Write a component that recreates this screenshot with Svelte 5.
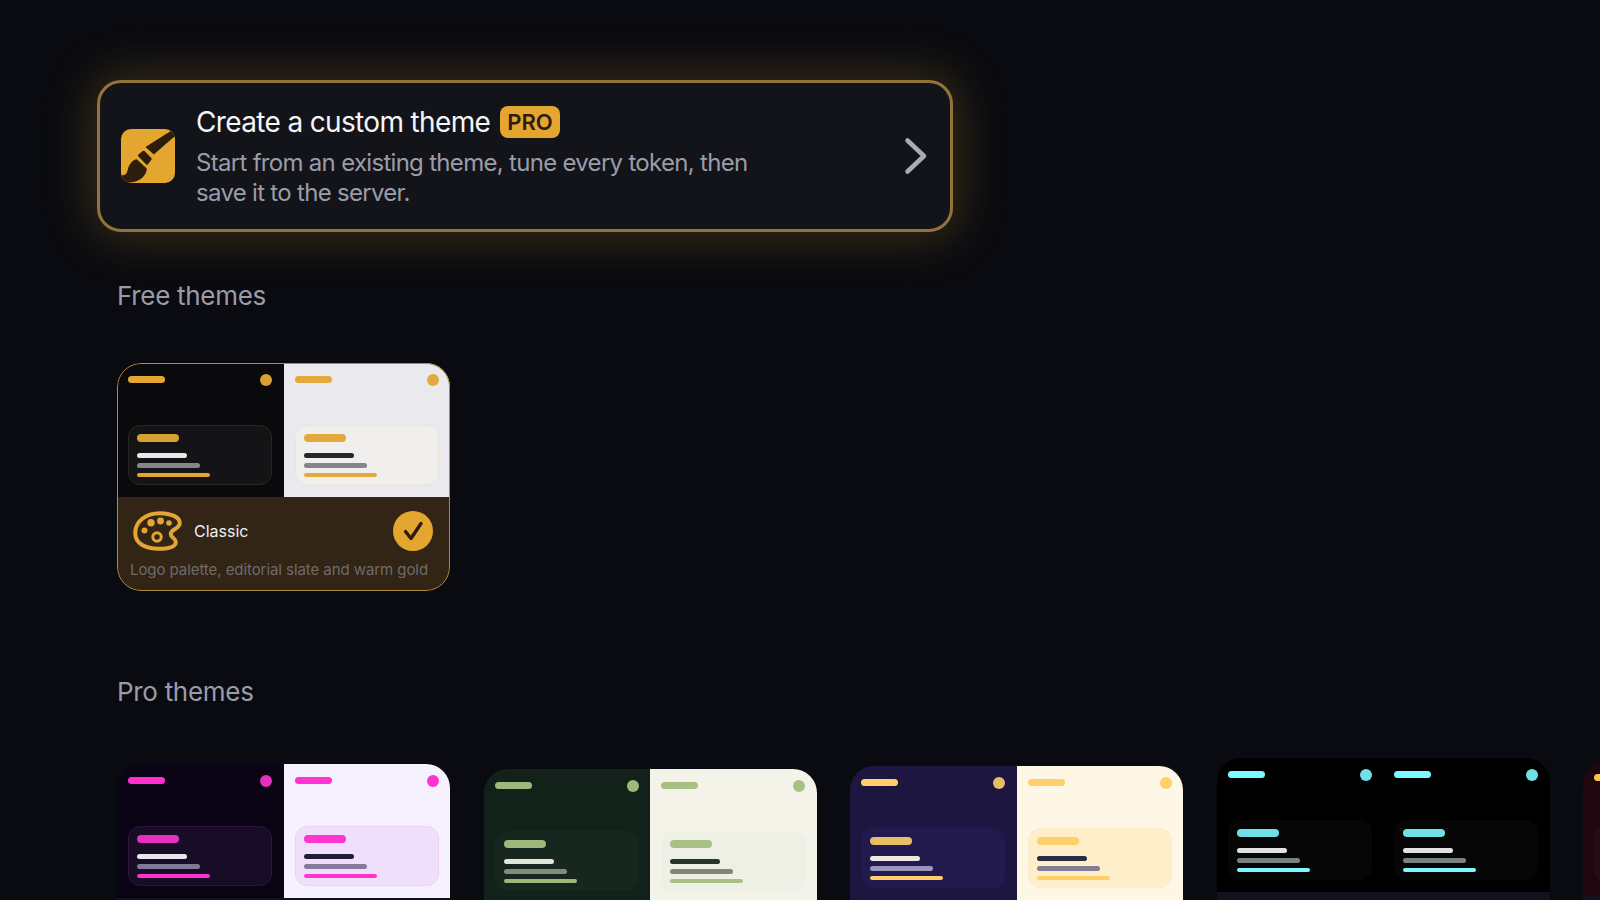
<script>
  const classic = {
    name: 'Classic',
    desc: 'Logo palette, editorial slate and warm gold',
    dark: { bg: '#0a0a0c', inner: '#141315', edge: '#2b271e', accent: '#e3a633', soft: '#d9a033', l1: '#e8e8ea', l2: '#85858a' },
    light: { bg: '#e9e9ee', inner: '#f0efee', edge: '#efe6d2', accent: '#e5a93b', soft: '#e5a93b', l1: '#26262b', l2: '#85858c' }
  };

  const proThemes = [
    {
      top: 6,
      dark: { bg: '#0a0415', inner: '#170d27', edge: '#33163f', accent: '#ff2fd0', soft: '#e52fc0', l1: '#ebe5f1', l2: '#7f7896' },
      light: { bg: '#f6f1ff', inner: '#efdffb', edge: '#f6cdf2', accent: '#ff33d2', soft: '#ff33d2', l1: '#241a3a', l2: '#857a9b' }
    },
    {
      top: 11,
      dark: { bg: '#12221b', inner: '#17271f', edge: '#17271f', accent: '#9db87a', soft: '#9db87a', l1: '#e2e6da', l2: '#7f8c7c' },
      light: { bg: '#f3f3ea', inner: '#eef0e6', edge: '#eef0e6', accent: '#a9c084', soft: '#a9c084', l1: '#28352c', l2: '#7f8775' }
    },
    {
      top: 8,
      dark: { bg: '#1c1640', inner: '#221a4c', edge: '#221a4c', accent: '#ffcf6a', soft: '#e8bd66', l1: '#efe9e2', l2: '#9c94c0' },
      light: { bg: '#fff7e6', inner: '#ffeeca', edge: '#fdeccb', accent: '#ffcf6a', soft: '#ffcf6a', l1: '#2a2a45', l2: '#827f92' }
    },
    {
      top: 0,
      dark: { bg: '#000000', inner: '#060606', edge: '#060606', accent: '#7df9ff', soft: '#6fe0e6', l1: '#e0e2e4', l2: '#7a8280' },
      light: { bg: '#000000', inner: '#060606', edge: '#060606', accent: '#7df9ff', soft: '#6fe0e6', l1: '#e0e2e4', l2: '#7a8280' }
    },
    {
      top: 3,
      dark: { bg: '#1e070e', inner: '#260c14', edge: '#260c14', accent: '#ffc04d', soft: '#ffc04d', l1: '#e8e0e0', l2: '#8a7a7c' },
      light: { bg: '#1e070e', inner: '#260c14', edge: '#260c14', accent: '#ffc04d', soft: '#ffc04d', l1: '#e8e0e0', l2: '#8a7a7c' }
    }
  ];

  const vars = (s) =>
    `--bg:${s.bg};--inner:${s.inner};--edge:${s.edge};--accent:${s.accent};--soft:${s.soft};--l1:${s.l1};--l2:${s.l2}`;
</script>

{#snippet half(s)}
  <div class="half" style={vars(s)}>
    <div class="head">
      <span class="bar"></span>
      <span class="dot"></span>
    </div>
    <div class="inner">
      <span class="inner-title"></span>
      <span class="line l1"></span>
      <span class="line l2"></span>
      <span class="line l3"></span>
    </div>
  </div>
{/snippet}

<main class="page">
  <button class="banner">
    <span class="brush">
      <svg viewBox="0 0 54 54" width="54" height="54">
        <path fill="#2c1d0c" d="M49 2.500c2-1.300 5-.5 5 2v2.500L32.800 25.500 24.500 18z" />
        <path fill="#2c1d0c" d="M17.500 25.500l4.300-3.500c.5-.4 1.200-.4 1.700.1l6.800 6.800c.5.500.5 1.200.2 1.700l-3.500 4.700c-.4.6-1.200.7-1.800.2l-7.800-7.900c-.6-.6-.6-1.500.1-2.100z" />
        <path fill="#2c1d0c" d="M14.500 30.500c.5-.2 1-.2 1.500.1l9.500 8.700c.3.300.4.700.3 1.100-.7 4-2.900 7.500-6.800 10-4.800 3-12.800 4-16 1.800C1 51 0 48.500 0 46.500c2.800 0 5.200-1 6-3.200 1-2.700 1-5.300 3-8 1.300-2.200 3.200-4 5.500-4.800z" />
      </svg>
    </span>
    <span class="banner-text">
      <span class="banner-title">
        <span>Create a custom theme</span>
        <span class="pro">PRO</span>
      </span>
      <span class="banner-sub">Start from an existing theme, tune every token, then save it to the server.</span>
    </span>
    <svg class="chevron" viewBox="0 0 24 38" width="24" height="38">
      <path d="M3.500 3.500 L20 19 L3.500 34.500" fill="none" stroke="#a9acb8" stroke-width="4.500" stroke-linecap="round" stroke-linejoin="round" />
    </svg>
  </button>

  <h2 class="free-label">Free themes</h2>

  <div class="card selected">
    <div class="preview">
      {@render half(classic.dark)}
      {@render half(classic.light)}
    </div>
    <div class="footer">
      <div class="name-row">
        <svg class="palette" viewBox="0 0 49 40" width="49" height="40">
          <path d="M2.200 22C2.200 11 12 2.200 27 2.200c11 0 19.800 4 19.800 9.800 0 6-9 6-9 11 0 4 5 4 5 8 0 5-7 6.800-17 6.800C13 37.800 2.200 33 2.200 22z" fill="none" stroke="#e3a633" stroke-width="4" />
          <circle cx="11.500" cy="19.500" r="3" fill="#e3a633" />
          <circle cx="18" cy="11.800" r="3.700" fill="#e3a633" />
          <circle cx="27.500" cy="10" r="3.400" fill="#e3a633" />
          <circle cx="36" cy="12" r="2.800" fill="#e3a633" />
          <circle cx="24" cy="26" r="4.200" fill="none" stroke="#e3a633" stroke-width="3" />
        </svg>
        <span class="name">{classic.name}</span>
        <span class="check">
          <svg viewBox="0 0 40 40" width="40" height="40">
            <path d="M12.500 20.500 L18 27.500 L28 12.500" fill="none" stroke="#2c1d0c" stroke-width="3.400" stroke-linecap="round" stroke-linejoin="round" />
          </svg>
        </span>
      </div>
      <p class="desc">{classic.desc}</p>
    </div>
  </div>

  <h2 class="pro-label">Pro themes</h2>

  <div class="row">
    {#each proThemes as theme}
      <div class="card" style="margin-top:{theme.top}px">
        <div class="preview">
          {@render half(theme.dark)}
          {@render half(theme.light)}
        </div>
        <div class="footer"></div>
      </div>
    {/each}
  </div>
</main>

<style>
  :global(body) {
    background: #0a0b10;
    overflow: hidden;
  }

  .page {
    height: 900px;
    box-sizing: border-box;
    padding: 80px 0 0 117px;
    overflow: hidden;
    font-family: Inter, "Liberation Sans", sans-serif;
  }

  .banner {
    display: flex;
    align-items: center;
    box-sizing: border-box;
    width: 856px;
    height: 152px;
    margin-left: -20px;
    padding: 0 22px 0 21px;
    border: 3px solid #94733a;
    border-radius: 24px;
    background: #12141a;
    box-shadow: 0 0 48px 6px rgba(229, 168, 48, 0.22);
    font-family: inherit;
    text-align: left;
  }

  .brush {
    flex: none;
    width: 54px;
    height: 54px;
    border-radius: 10px;
    background: #e5a62f;
    overflow: hidden;
  }

  .brush svg {
    display: block;
  }

  .banner-text {
    display: flex;
    flex: 1;
    flex-direction: column;
    margin-left: 21px;
  }

  .banner-title {
    display: flex;
    align-items: center;
    gap: 10px;
    height: 36px;
    margin-bottom: 8px;
    font-size: 28px;
    letter-spacing: -0.65px;
    color: #f5f5f7;
  }

  .pro {
    padding: 0 7px;
    height: 32px;
    line-height: 32px;
    border-radius: 8px;
    background: #e5a62f;
    color: #2c1d0c;
    font-size: 22px;
    font-weight: 600;
    letter-spacing: 0;
  }

  .banner-sub {
    width: 580px;
    font-size: 24px;
    line-height: 30px;
    letter-spacing: -0.7px;
    color: #9a9ca8;
  }

  .chevron {
    flex: none;
  }

  h2 {
    margin: 0;
    font-size: 26px;
    font-weight: 400;
    line-height: 32px;
    letter-spacing: -0.3px;
    color: #9a9ca8;
  }

  .free-label {
    margin-top: 48px;
    margin-bottom: 51px;
  }

  .pro-label {
    margin-top: 85px;
    margin-bottom: 50px;
  }

  .row {
    display: flex;
    align-items: flex-start;
    gap: 33.500px;
  }

  .card {
    position: relative;
    flex: none;
    width: 333px;
    border-radius: 24px;
    overflow: hidden;
    background: #11131a;
  }

  .card.selected::after {
    content: '';
    position: absolute;
    inset: 0;
    border: 1.500px solid #b08a3e;
    border-radius: 24px;
    pointer-events: none;
  }

  .preview {
    display: flex;
    height: 134px;
  }

  .half {
    display: flex;
    flex: 1;
    flex-direction: column;
    justify-content: space-between;
    box-sizing: border-box;
    padding: 13px 11.500px 12px 11px;
    background: var(--bg);
  }

  .head {
    display: flex;
    align-items: center;
    justify-content: space-between;
    height: 7px;
  }

  .bar {
    width: 37px;
    height: 7px;
    border-radius: 4px;
    background: var(--accent);
  }

  .dot {
    width: 12px;
    height: 12px;
    border-radius: 50%;
    background: var(--soft);
  }

  .inner {
    display: flex;
    flex-direction: column;
    align-items: flex-start;
    box-sizing: border-box;
    height: 60px;
    padding: 8px 8px 0;
    border: 1px solid var(--edge);
    border-radius: 12px;
    background: var(--inner);
  }

  .inner-title {
    width: 42px;
    height: 8px;
    border-radius: 4px;
    background: var(--soft);
    margin-bottom: 11px;
  }

  .line {
    border-radius: 3px;
    height: 5px;
    margin-bottom: 5px;
  }

  .l1 {
    width: 50px;
    background: var(--l1);
  }

  .l2 {
    width: 63px;
    background: var(--l2);
  }

  .l3 {
    width: 73px;
    height: 4px;
    background: var(--accent);
  }

  .footer {
    height: 93px;
  }

  .selected .footer {
    box-sizing: border-box;
    height: 94px;
    padding: 14px 17px 0 16px;
    background: #322516;
  }

  .name-row {
    display: flex;
    align-items: center;
    height: 40px;
  }

  .palette {
    flex: none;
  }

  .name {
    flex: 1;
    margin-left: 12px;
    font-size: 16px;
    color: #f0f0f2;
  }

  .check {
    flex: none;
    width: 40px;
    height: 40px;
    border-radius: 50%;
    background: #e5a62f;
  }

  .check svg {
    display: block;
  }

  .desc {
    margin: 9px 0 0 -3px;
    font-size: 15px;
    line-height: 20px;
    letter-spacing: -0.07px;
    color: #6e6b6a;
    white-space: nowrap;
  }
</style>
